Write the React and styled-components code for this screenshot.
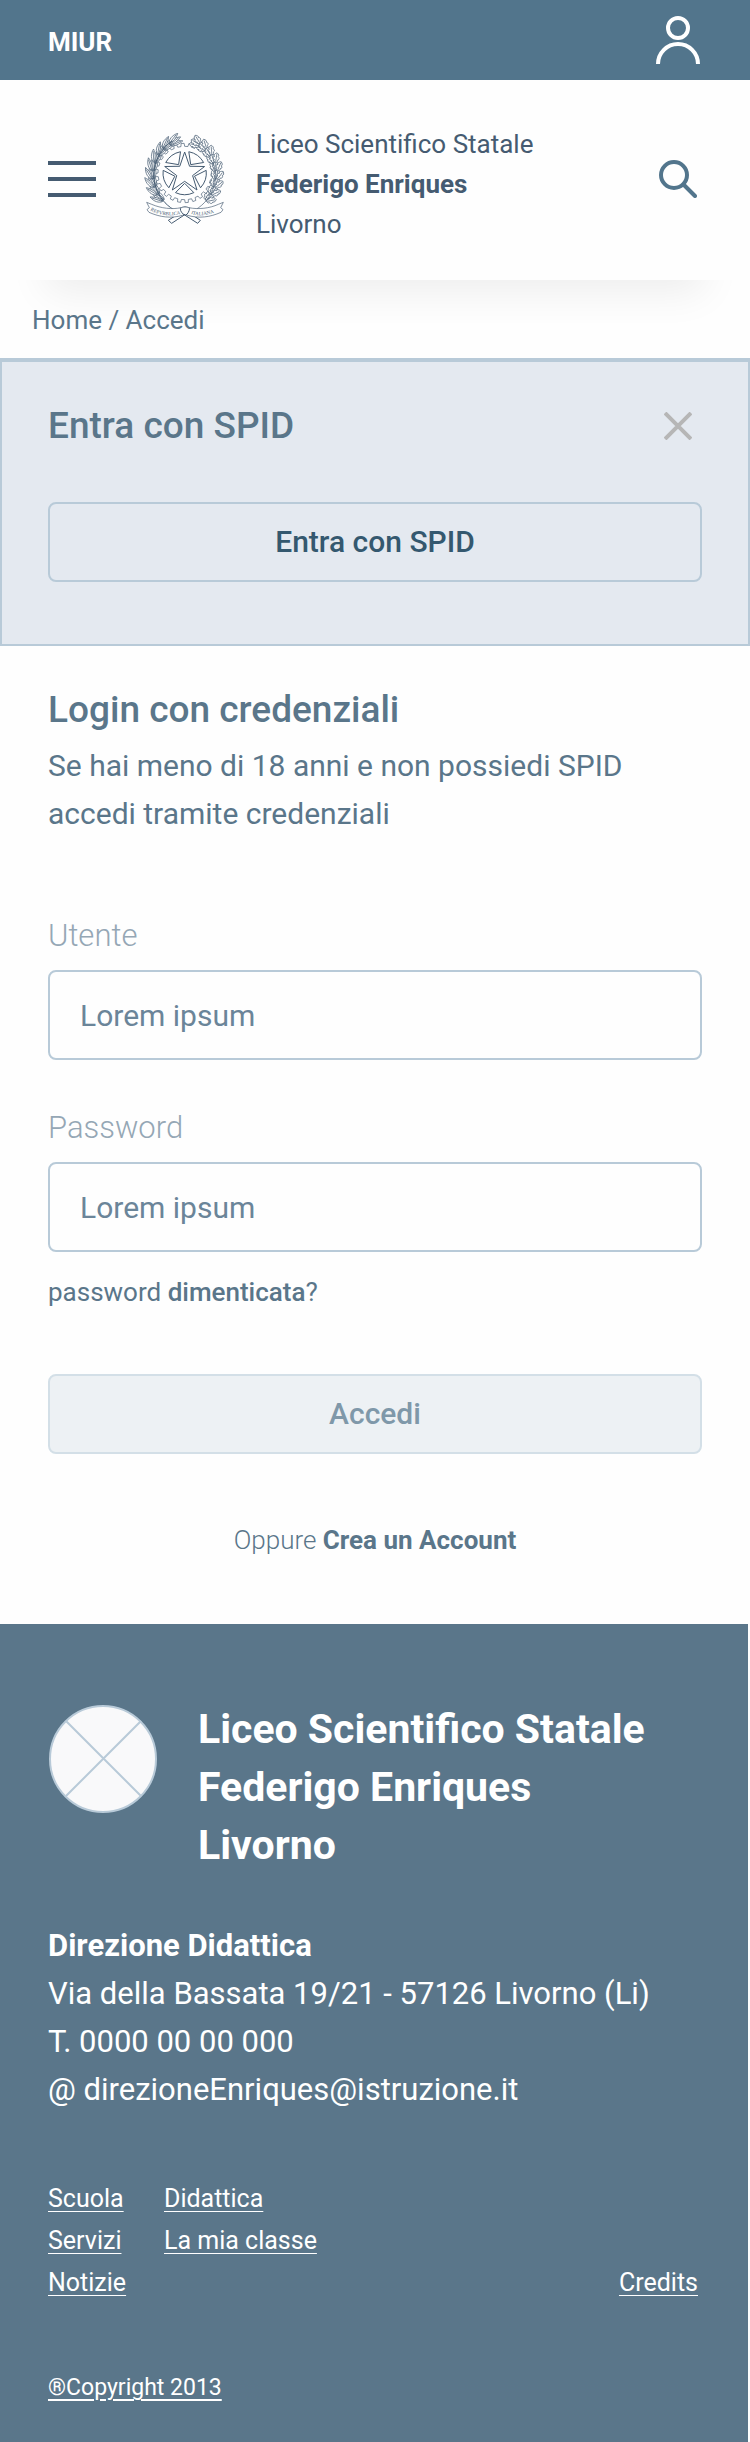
import React from 'react';
import styled, { createGlobalStyle } from 'styled-components';

const color = {
  bar: '#52758c',
  ink: '#455b71',
  slate: '#5a768a',
  deep: '#34586f',
  line: '#b8cad8',
  panel: '#e4e9f0',
  label: '#95a7b5',
  hint: '#6b8599',
};

const Global = createGlobalStyle`
  *, *::before, *::after { box-sizing: border-box; }
  body {
    margin: 0;
    background: #fefefe;
    color: ${color.slate};
    font-family: Roboto, "Liberation Sans", sans-serif;
    font-size: 30px;
    line-height: 48px;
  }
  h1, h2, p, ul, address { margin: 0; padding: 0; font-style: normal; }
  ul { list-style: none; }
  a { color: inherit; text-decoration: none; }
  button, input { font: inherit; }
  svg { display: block; }
`;

const TopBar = styled.div`
  display: flex;
  align-items: center;
  justify-content: space-between;
  min-height: 80px;
  padding: 0 50px 0 48px;
  background: ${color.bar};
  color: #fff;
`;

const Brand = styled.a`
  padding-top: 4px;
  font-size: 26px;
  font-weight: 700;
  line-height: 32px;
`;

const IconButton = styled.button`
  display: flex;
  align-items: center;
  justify-content: center;
  flex: none;
  width: ${(p) => p.$width || 48}px;
  height: 48px;
  padding: 0;
  border: 0;
  background: none;
  color: inherit;
`;

const Header = styled.header`
  position: relative;
  display: flex;
  align-items: center;
  padding: 34px 48px 36px;
  background: #fefefe;
  color: ${color.ink};
  box-shadow: 0 58px 40px -46px rgba(0, 0, 0, 0.07);
`;

const EmblemLink = styled.a`
  flex: none;
  margin: 0 30px 0 48px;
`;

const SchoolName = styled.h1`
  flex: 1;
  padding-top: 10px;
  font-size: 26px;
  font-weight: 400;
  line-height: 40px;
`;

const Search = styled.span`
  color: ${color.bar};
`;

const Breadcrumb = styled.nav`
  position: relative;
  padding: 20px 32px 18px;
  font-size: 26px;
  line-height: 40px;
`;

const SpidPanel = styled.section`
  padding: 40px 46px 62px;
  border: 2px solid ${color.line};
  border-top-width: 4px;
  background: ${color.panel};
`;

const PanelHead = styled.div`
  display: flex;
  align-items: center;
  justify-content: space-between;
  margin-bottom: 52px;
  color: #b6b6b6;
`;

const Heading = styled.h2`
  color: ${color.slate};
  font-size: 37px;
  font-weight: 500;
  line-height: 48px;
`;

const WideButton = styled.button`
  display: block;
  width: 100%;
  height: 80px;
  border: 2px solid ${(p) => (p.$muted ? '#d3dfe7' : color.line)};
  border-radius: 8px;
  background: ${(p) => (p.$muted ? '#edf1f4' : 'transparent')};
  color: ${(p) => (p.$muted ? '#7f98a9' : color.deep)};
  font-weight: 500;
`;

const LoginForm = styled.form`
  padding: 40px 48px 64px;
`;

const Intro = styled.p`
  margin: 8px 0 74px;
`;

const Field = styled.div`
  display: flex;
  flex-direction: column;
  gap: 10px;
  margin-top: ${(p) => (p.$next ? 44 : 0)}px;
`;

const Label = styled.label`
  color: ${color.label};
  font-size: 31px;
  font-weight: 300;
`;

const TextBox = styled.input`
  width: 100%;
  height: 90px;
  padding: 0 30px;
  border: 2px solid ${color.line};
  border-radius: 8px;
  background: transparent;
  color: ${color.hint};
  &::placeholder { color: ${color.hint}; opacity: 1; }
`;

const Forgot = styled.p`
  margin: 20px 0 62px;
  font-size: 26px;
  line-height: 40px;
  strong { font-weight: 500; }
`;

const Register = styled.p`
  margin-top: 66px;
  font-size: 26px;
  font-weight: 300;
  line-height: 40px;
  text-align: center;
  a { font-weight: 700; }
`;

const Footer = styled.footer`
  margin-right: 2px;
  padding: 76px 50px 38px 48px;
  background: ${color.slate};
  color: #fff;
`;

const FooterHead = styled.div`
  display: flex;
  gap: 40px;
  svg { flex: none; margin-top: 4px; }
`;

const FooterTitle = styled.h2`
  font-size: 41px;
  font-weight: 700;
  line-height: 58px;
`;

const Address = styled.address`
  margin: 48px 0 64px;
  font-size: 31px;
`;

const FooterNav = styled.nav`
  display: grid;
  grid-template-columns: 116px 1fr auto;
  font-size: 25px;
  line-height: 42px;
  a {
    text-decoration: underline 1px;
    text-underline-offset: 4px;
    text-decoration-skip-ink: none;
  }
`;

const Credits = styled.a`
  align-self: end;
`;

const Copyright = styled.a`
  display: block;
  margin-top: 68px;
  font-size: 23px;
  line-height: 32px;
  span {
    text-decoration: underline 2px;
    text-underline-offset: 4px;
  }
`;

const UserIcon = () => (
  <svg width="44" height="48" viewBox="0 0 44 48" fill="none" stroke="currentColor" strokeWidth="4">
    <circle cx="22" cy="12" r="10" />
    <path d="M2 48a20 20 0 0 1 40 0" />
  </svg>
);

const MenuIcon = () => (
  <svg width="48" height="36" viewBox="0 0 48 36" stroke="currentColor" strokeWidth="4">
    <path d="M0 2h48M0 18h48M0 34h48" />
  </svg>
);

const SearchIcon = () => (
  <svg width="38" height="38" viewBox="0 0 38 38" fill="none" stroke="currentColor" strokeWidth="4" strokeLinecap="round">
    <circle cx="15" cy="15" r="13" />
    <path d="M25 25l11 11" />
  </svg>
);

const CloseIcon = () => (
  <svg width="28" height="28" viewBox="0 0 28 28" stroke="currentColor" strokeWidth="4">
    <path d="M1 1l26 26M27 1L1 27" />
  </svg>
);

const rad = (deg) => (deg * Math.PI) / 180;
const at = (r, deg) => `${(161 + r * Math.cos(rad(deg))).toFixed(1)} ${(158 + r * Math.sin(rad(deg))).toFixed(1)}`;
const range = (n) => Array.from({ length: n }, (_, i) => i);

const star = `M${range(10).map((i) => at(i % 2 ? 25 : 63, -90 + i * 36)).join('L')}Z`;
const wedges = range(5)
  .map((i) => -54 + i * 72)
  .map((a) => `M${at(31, a)}L${at(65, a - 25)}A65 65 0 0 1 ${at(65, a + 25)}Z`)
  .join('');
const gear = `M${range(24)
  .map((i) => i * 15)
  .map((a) => `${at(80, a)}L${at(80, a + 7)}L${at(89, a + 8)}L${at(89, a + 14)}`)
  .join('L')}Z`;

const OLIVE = 'M0 0C8 -8 24 -10 40 0C26 6 10 6 0 0ZM2 0L34 -1';
const OAK = 'M0 0C1 -6 6 -8 8 -5C10 -11 16 -11 17 -6C21 -10 26 -6 29 0C25 6 21 8 18 5C15 10 10 10 8 5C5 7 1 5 0 0ZM2 0L25 0';

// Leaves climb an arc on one side of the gear, fanning out from its twig.
const leaves = (side, count, fan) =>
  range(count).flatMap((i) => {
    const climb = 42 + (i * 110) / (count - 1);
    return fan.map((turn, row) => {
      const angle = 90 - side * climb;
      const r = 91 + row * 4;
      const x = 161 + r * Math.cos(rad(angle));
      const y = 164 + (r + 8) * Math.sin(rad(angle));
      return `translate(${x.toFixed(1)} ${y.toFixed(1)}) rotate(${(angle - side * (90 - turn)).toFixed(1)})`;
    });
  });

const Emblem = () => (
  <svg width="82" height="92" viewBox="39 38 246 276" fill="none" stroke={color.ink} strokeWidth="1" strokeLinejoin="round" role="img" aria-label="Repubblica Italiana">
    <path d={gear} strokeWidth="2" />
    <g fill="#fefefe" strokeWidth="2">
      {leaves(-1, 9, [-6, 8, 22]).map((t) => <path key={t} d={OLIVE} transform={t} />)}
      {leaves(1, 9, [-14, 4, 30]).map((t) => <path key={t} d={OAK} transform={t} />)}
    </g>
    <g strokeWidth="3">
      <path d={wedges} />
      <path d={star} />
      <path d="M128 268C76 236 56 176 76 122C88 92 104 76 124 62" />
      <path d="M194 268C246 236 266 176 246 126" strokeWidth="2" />
    </g>
    <g fill="#fefefe" strokeWidth="2">
      <path d="M152 274L112 300L122 309L166 280ZM170 274L208 300L200 309L158 282Z" strokeWidth="3" />
      <path d="M47 246L62 252C90 264 124 268 150 262L158 284C120 296 86 290 54 276L48 268L55 262Z" />
      <path d="M277 246L262 252C236 264 202 268 174 262L166 284C204 296 238 290 270 276L276 268L269 262Z" />
      <path d="M148 264C156 258 168 258 176 264C174 274 170 282 164 284C154 282 148 274 148 264Z" strokeWidth="3" />
    </g>
    <path id="scroll-left" stroke="none" d="M58 270C84 286 122 290 160 278" />
    <path id="scroll-right" stroke="none" d="M180 280C204 290 244 284 280 262" />
    <g fill={color.ink} stroke="none" fontFamily="Liberation Serif, serif" fontSize="15">
      <text><textPath href="#scroll-left">REPVBBLICA</textPath></text>
      <text><textPath href="#scroll-right">ITALIANA</textPath></text>
    </g>
  </svg>
);

const LogoPlaceholder = () => (
  <svg width="110" height="110" viewBox="0 0 110 110" fill="#f9f9fa" stroke={color.line} strokeWidth="2">
    <circle cx="55" cy="55" r="53" />
    <path d="M18 17l75 75M93 17L18 92" />
  </svg>
);

export default function App() {
  return (
    <>
      <Global />
      <TopBar>
        <Brand href="#miur">MIUR</Brand>
        <IconButton type="button" $width={44} aria-label="Area personale"><UserIcon /></IconButton>
      </TopBar>
      <Header>
        <IconButton type="button" aria-label="Menu"><MenuIcon /></IconButton>
        <EmblemLink href="#home"><Emblem /></EmblemLink>
        <SchoolName>
          Liceo Scientifico Statale<br />
          <strong>Federigo Enriques</strong><br />
          Livorno
        </SchoolName>
        <Search>
          <IconButton type="button" aria-label="Cerca"><SearchIcon /></IconButton>
        </Search>
      </Header>
      <Breadcrumb aria-label="Percorso">
        <a href="#home">Home</a> / <a href="#accedi">Accedi</a>
      </Breadcrumb>
      <main>
        <SpidPanel>
          <PanelHead>
            <Heading>Entra con SPID</Heading>
            <IconButton type="button" aria-label="Chiudi"><CloseIcon /></IconButton>
          </PanelHead>
          <WideButton type="button">Entra con SPID</WideButton>
        </SpidPanel>
        <LoginForm>
          <Heading>Login con credenziali</Heading>
          <Intro>
            Se hai meno di 18 anni e non possiedi SPID<br />
            accedi tramite credenziali
          </Intro>
          <Field>
            <Label htmlFor="utente">Utente</Label>
            <TextBox id="utente" type="text" placeholder="Lorem ipsum" />
          </Field>
          <Field $next>
            <Label htmlFor="password">Password</Label>
            <TextBox id="password" type="password" placeholder="Lorem ipsum" />
          </Field>
          <Forgot><a href="#recupero">password <strong>dimenticata</strong>?</a></Forgot>
          <WideButton type="submit" $muted>Accedi</WideButton>
          <Register>Oppure <a href="#registrazione">Crea un Account</a></Register>
        </LoginForm>
      </main>
      <Footer>
        <FooterHead>
          <LogoPlaceholder />
          <FooterTitle>
            Liceo Scientifico Statale<br />
            Federigo Enriques<br />
            Livorno
          </FooterTitle>
        </FooterHead>
        <Address>
          <strong>Direzione Didattica</strong><br />
          Via della Bassata 19/21 - 57126 Livorno (Li)<br />
          T. 0000 00 00 000<br />
          @ direzioneEnriques@istruzione.it
        </Address>
        <FooterNav aria-label="Collegamenti">
          <ul>
            <li><a href="#scuola">Scuola</a></li>
            <li><a href="#servizi">Servizi</a></li>
            <li><a href="#notizie">Notizie</a></li>
          </ul>
          <ul>
            <li><a href="#didattica">Didattica</a></li>
            <li><a href="#classe">La mia classe</a></li>
          </ul>
          <Credits href="#credits">Credits</Credits>
        </FooterNav>
        <Copyright href="#copyright"><span>®Copyright 2013</span></Copyright>
      </Footer>
    </>
  );
}
